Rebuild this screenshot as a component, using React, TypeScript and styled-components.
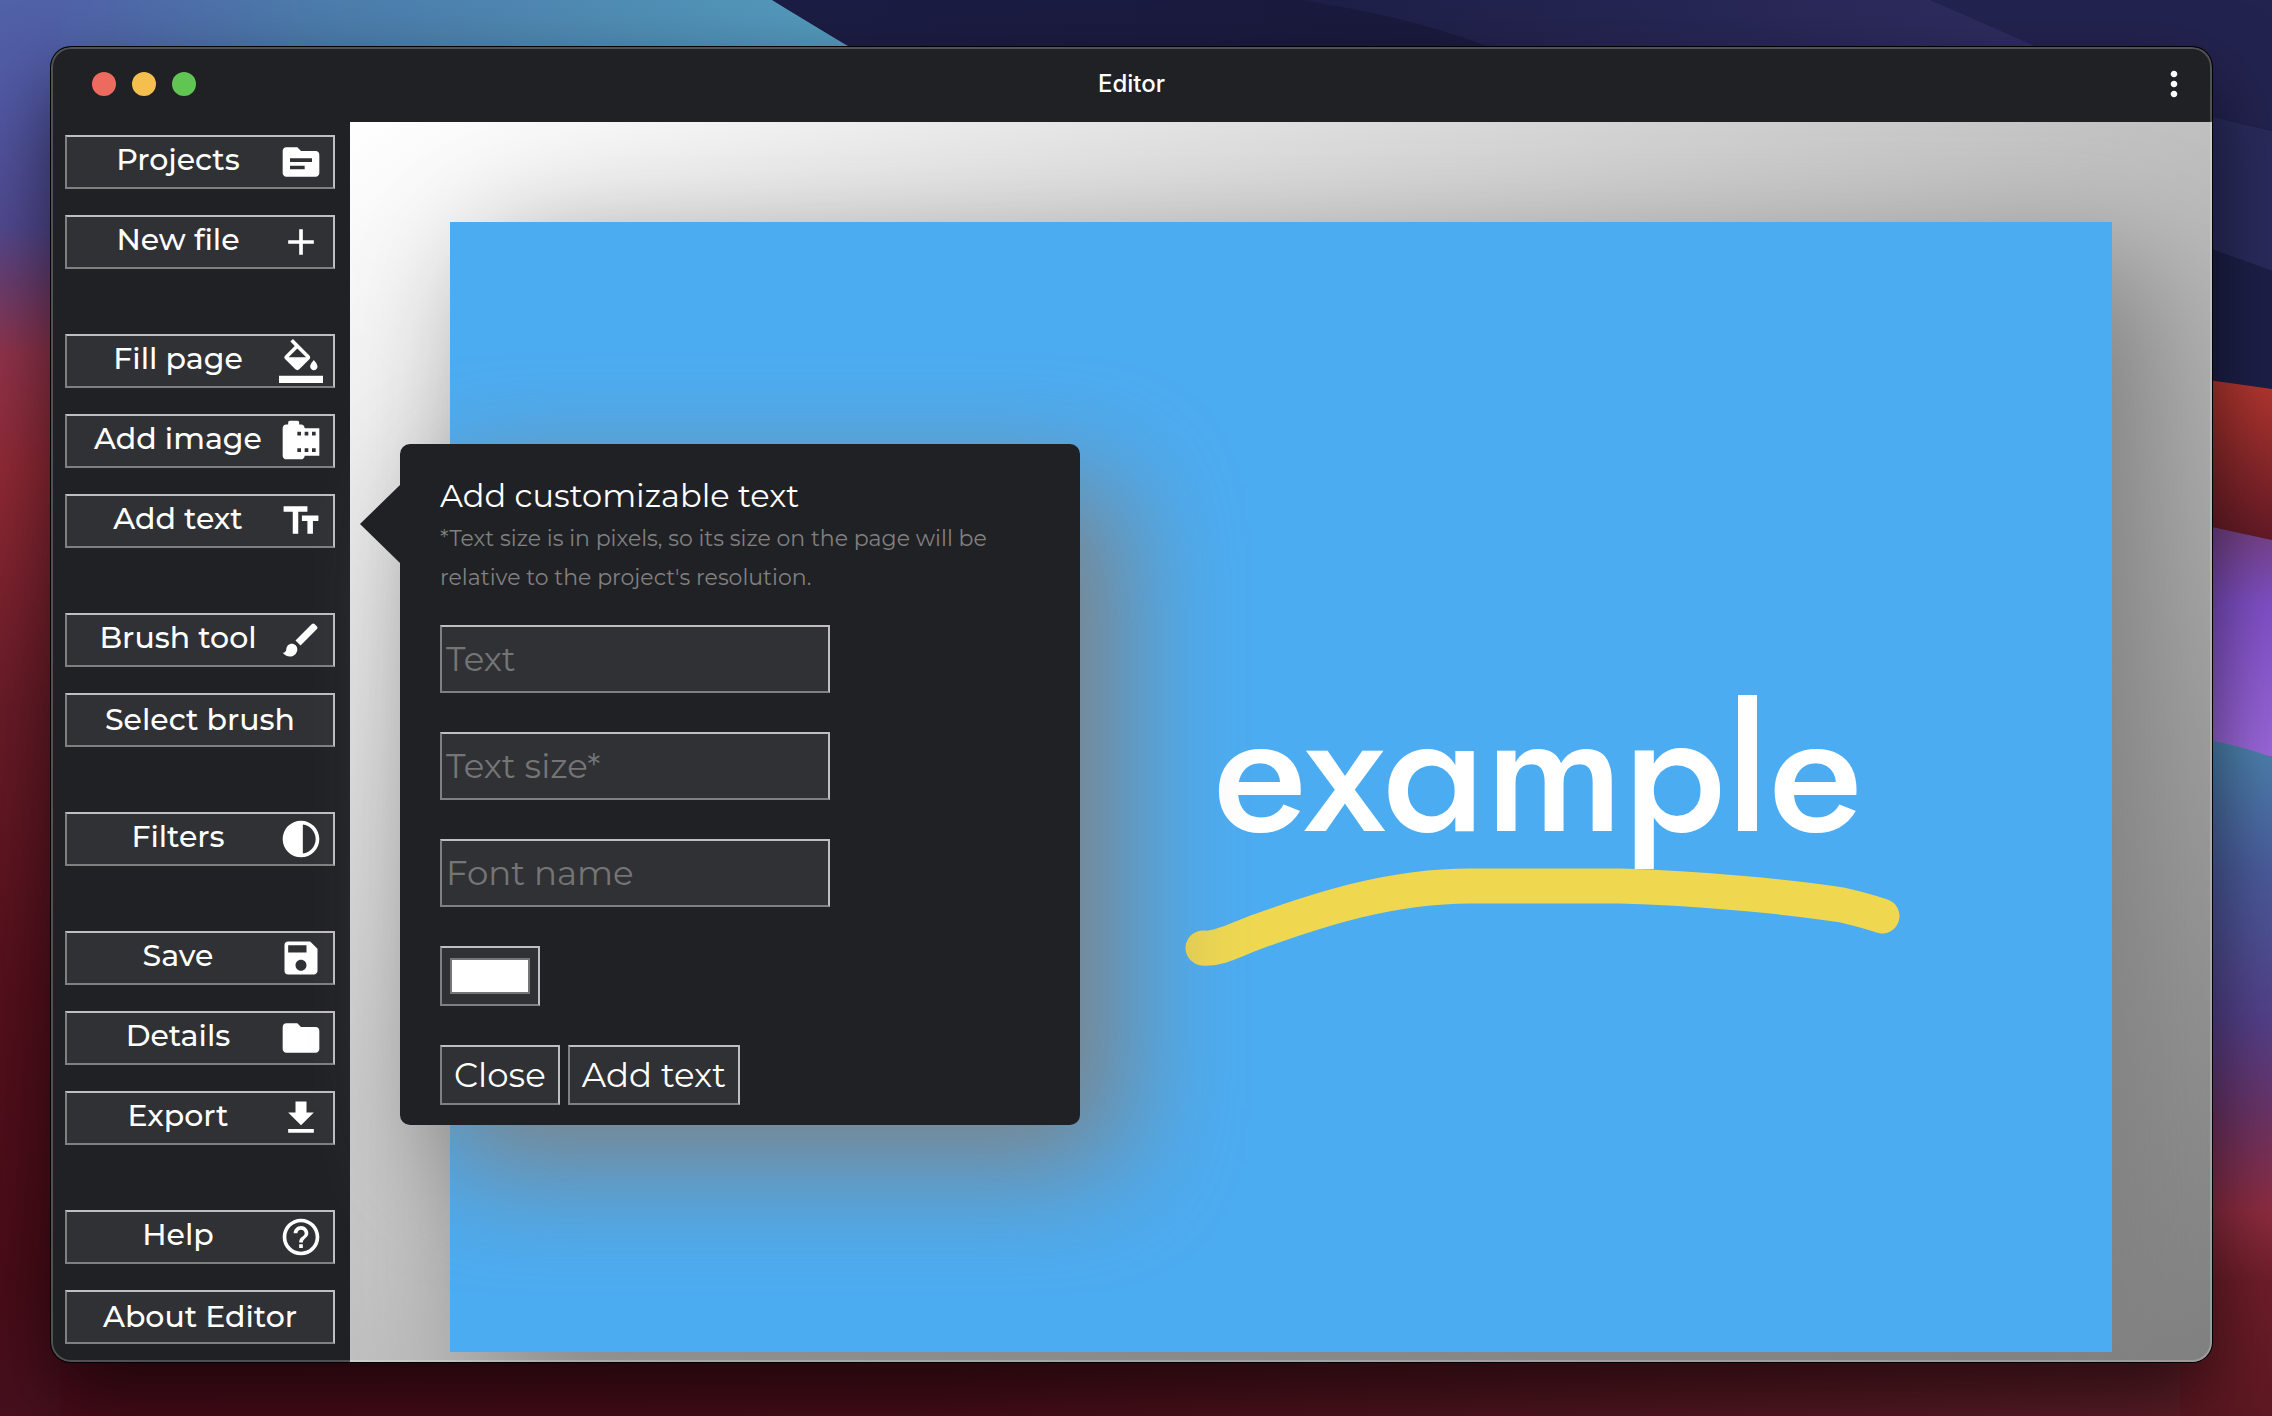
import React, { useState } from "react";
import styled, { createGlobalStyle } from "styled-components";
import type { IconType } from "react-icons";
import {
  MdAdd,
  MdBrush,
  MdCameraRoll,
  MdContrast,
  MdFileDownload,
  MdFolder,
  MdHelpOutline,
  MdMoreVert,
  MdSave,
  MdSource,
  MdTextFields,
} from "react-icons/md";

const color = {
  chrome: "#202124",
  control: "#303135",
  light: "#c0bebe",
  gray: "#808080",
  page: "#4cacf1",
  stroke: "#efd850",
};

const GlobalStyle = createGlobalStyle`
  *, *::before, *::after { box-sizing: border-box; }
  body { margin: 0; font-family: Montserrat, Inter, sans-serif; color: #fff; background: #48101a; }
`;

const Desktop = styled.div`
  position: relative;
  display: flex;
  min-height: 100vh;
  padding: 47px 60px 54px 51px;
  overflow: hidden;
`;

const WallpaperArt = styled.svg`
  position: absolute;
  inset: 0;
  width: 100%;
  height: 100%;
`;

const Window = styled.div`
  position: relative;
  flex: 1;
  display: flex;
  flex-direction: column;
  border-radius: 20px;
  overflow: hidden;
  background: ${color.chrome};
  box-shadow: 0 0 0 1px #000, 0 36px 80px rgba(0, 0, 0, 0.6);

  &::after {
    content: "";
    position: absolute;
    inset: 0;
    z-index: 3;
    border-radius: inherit;
    box-shadow: inset 0 0 0 2px rgba(255, 255, 255, 0.22);
    pointer-events: none;
  }
`;

const TitleBar = styled.header`
  display: grid;
  grid-template-columns: 1fr auto 1fr;
  align-items: center;
  height: 75px;
  padding: 0 18px 2px;
`;

const Lights = styled.div`
  display: flex;
  gap: 16px;
  padding-left: 23px;
`;

const Light = styled.button<{ $fill: string }>`
  width: 24px;
  height: 24px;
  padding: 0;
  border: 0;
  border-radius: 50%;
  background: ${(p) => p.$fill};
`;

const WindowTitle = styled.h1`
  margin: 0;
  font: 500 24px/32px Inter, sans-serif;
`;

const MenuButton = styled.button`
  display: flex;
  justify-self: end;
  padding: 0;
  border: 0;
  background: none;
  color: #fff;
  font-size: 40px;
`;

const Body = styled.div`
  flex: 1;
  display: flex;
`;

const Sidebar = styled.nav`
  flex: none;
  display: flex;
  flex-direction: column;
  gap: 65px;
  width: 299px;
  padding: 13px 15px 18px 14px;
`;

const Group = styled.div`
  display: flex;
  flex-direction: column;
  gap: 26px;
`;

const bevel = `
  border: 2px solid;
  border-color: ${color.light} ${color.light} ${color.gray} ${color.gray};
  border-radius: 0;
  background: ${color.control};
  color: #fff;
  font-family: inherit;
`;

const ToolButton = styled.button`
  ${bevel}
  display: flex;
  align-items: center;
  height: 54px;
  padding: 0 10px;
  font-size: 30px;
  font-weight: 500;
  line-height: 38px;
`;

const ToolLabel = styled.span<{ $raised: boolean }>`
  flex: 1;
  padding-bottom: ${(p) => (p.$raised ? 4 : 0)}px;
  white-space: nowrap;
`;

const ToolIcon = styled.span`
  display: flex;
  font-size: 44px;
`;

const Main = styled.main`
  position: relative;
  flex: 1;
  display: flex;
`;

const Workspace = styled.section`
  flex: 1;
  display: flex;
  padding: 100px 100px 10px;
  overflow: hidden;
  background: linear-gradient(to bottom right, #fff, ${color.gray});
`;

const Page = styled.div`
  flex: 1;
  display: flex;
  background: ${color.page};
  box-shadow: 40px 40px 120px ${color.gray};
`;

const PageArt = styled.svg`
  flex: 1;
  width: 100%;
`;

const Artwork = styled.text`
  font: 500 174px Jost, Inter, sans-serif;
  font-feature-settings: "ss01";
  fill: #fff;
`;

const Popover = styled.form`
  position: absolute;
  top: 322px;
  left: 50px;
  z-index: 2;
  display: flex;
  flex-direction: column;
  align-items: flex-start;
  gap: 39px;
  width: 680px;
  padding: 30px 40px 20px;
  border-radius: 10px;
  background: ${color.chrome};
  box-shadow: 40px 40px 120px ${color.gray};

  &::before {
    content: "";
    position: absolute;
    top: 40px;
    left: -40px;
    width: 41px;
    height: 80px;
    background: ${color.chrome};
    clip-path: polygon(100% 0, 0 50%, 100% 100%);
  }
`;

const Intro = styled.div`
  margin-bottom: -11px;
`;

const PopoverTitle = styled.h2`
  margin: 0;
  padding-bottom: 1px;
  font-size: 32px;
  font-weight: 400;
  line-height: 44px;
`;

const Note = styled.p`
  margin: 0;
  color: ${color.gray};
  font-size: 22px;
  line-height: 39px;
`;

const TextInput = styled.input`
  ${bevel}
  width: 390px;
  height: 68px;
  padding: 2px 4px;
  font-size: 34px;

  &::placeholder {
    color: #757575;
    opacity: 1;
  }
`;

const ColorInput = styled.input`
  ${bevel}
  width: 100px;
  height: 60px;
  padding: 10px 8px;

  &::-webkit-color-swatch-wrapper {
    padding: 0;
  }
  &::-webkit-color-swatch {
    border: 2px solid #757575;
    border-radius: 0;
  }
`;

const Actions = styled.div`
  display: flex;
  gap: 8px;
`;

const ActionButton = styled.button`
  ${bevel}
  height: 60px;
  padding: 0 12px;
  font-size: 34px;
  line-height: 44px;
`;

function FillIcon() {
  return (
    <svg viewBox="0 0 24 24" width="1em" height="1em" fill="currentColor" aria-hidden="true">
      <path d="M16.56 8.94L7.62 0 6.21 1.41l2.38 2.38-5.15 5.15a1.49 1.49 0 0 0 0 2.12l5.5 5.5c.29.29.68.44 1.06.44s.77-.15 1.06-.44l5.5-5.5c.59-.58.59-1.53 0-2.12zM5.21 10L10 5.21 14.79 10H5.21zM19 11.5s-2 2.17-2 3.5c0 1.1.9 2 2 2s2-.9 2-2c0-1.33-2-3.5-2-3.5zM0 20h24v4H0z" />
    </svg>
  );
}

type Tool = { label: string; icon?: IconType | (() => React.JSX.Element) };

const groups: Tool[][] = [
  [
    { label: "Projects", icon: MdSource },
    { label: "New file", icon: MdAdd },
  ],
  [
    { label: "Fill page", icon: FillIcon },
    { label: "Add image", icon: MdCameraRoll },
    { label: "Add text", icon: MdTextFields },
  ],
  [{ label: "Brush tool", icon: MdBrush }, { label: "Select brush" }],
  [{ label: "Filters", icon: MdContrast }],
  [
    { label: "Save", icon: MdSave },
    { label: "Details", icon: MdFolder },
    { label: "Export", icon: MdFileDownload },
  ],
  [{ label: "Help", icon: MdHelpOutline }, { label: "About Editor" }],
];

const lights = [
  { name: "Close window", fill: "#ed6a5e" },
  { name: "Minimize window", fill: "#f5bf4f" },
  { name: "Zoom window", fill: "#61c554" },
];

type Stops = [number, string][];

function Gradient({ id, stops, across = false }: { id: string; stops: Stops; across?: boolean }) {
  return (
    <linearGradient id={id} x1="0" y1="0" x2={across ? 1 : 0} y2={across ? 0 : 1}>
      {stops.map(([at, tint]) => (
        <stop key={at} offset={at} stopColor={tint} />
      ))}
    </linearGradient>
  );
}

function Wallpaper() {
  return (
    <WallpaperArt viewBox="0 0 2272 1416" preserveAspectRatio="none" aria-hidden="true">
      <defs>
        <Gradient
          id="leftSide"
          stops={[
            [0, "#5062a8"],
            [0.08, "#5258a4"],
            [0.16, "#524a92"],
            [0.2, "#6c3e70"],
            [0.25, "#92344c"],
            [0.33, "#922a36"],
            [0.5, "#6a1c28"],
            [0.7, "#56101c"],
            [0.9, "#4a0c18"],
            [1, "#48101e"],
          ]}
        />
        <Gradient id="sky" across stops={[[0, "#5062a8"], [0.3, "#4c7cac"], [1, "#549ebe"]]} />
        <Gradient id="navy" across stops={[[0, "#1c1d44"], [0.4, "#1a1a3e"], [1, "#202048"]]} />
        <Gradient id="dune" across stops={[[0, "#1e1f48"], [1, "#302e62"]]} />
        <Gradient id="red" stops={[[0, "#b83830"], [1, "#641a26"]]} />
        <Gradient id="purple" stops={[[0, "#74407e"], [0.35, "#8050c8"], [1, "#9c68dc"]]} />
        <Gradient
          id="rightSide"
          stops={[
            [0, "#4c86b0"],
            [0.2, "#4a5c9c"],
            [0.42, "#54408a"],
            [0.55, "#6a3468"],
            [0.7, "#8e2c40"],
            [0.8, "#701e2a"],
            [1, "#5e1822"],
          ]}
        />
        <Gradient id="floor" across stops={[[0, "#4a0c1a"], [0.4, "#4c0e1a"], [1, "#62202a"]]} />
      </defs>
      <rect width="1136" height="1416" fill="url(#leftSide)" />
      <path d="M60 0H900V200H60z" fill="url(#sky)" />
      <path d="M60 1300H2272V1416H60z" fill="url(#floor)" />
      <path d="M772 0Q812 22 848 46L1000 200H2272V500H1136V200L848 46z" fill="#1c1e44" />
      <path d="M772 0H2272V140H1000Q920 90 848 46z" fill="url(#navy)" />
      <path d="M1300 0H1930Q1990 22 2035 46L2100 100H1580Q1500 30 1300 0z" fill="url(#dune)" />
      <path d="M1930 0H2272V130L2200 114L2035 46z" fill="#232350" />
      <path d="M2200 114L2272 131V271L2200 245z" fill="#2a2b5c" />
      <path d="M2200 245L2272 271V389L2200 378z" fill="#1d1f48" />
      <path d="M2180 376L2272 389V540L2180 520z" fill="url(#red)" />
      <path d="M2180 520L2272 540V757L2180 735z" fill="url(#purple)" />
      <path d="M2180 735Q2230 742 2272 757V1416H2180z" fill="url(#rightSide)" />
    </WallpaperArt>
  );
}

function PageDrawing() {
  return (
    <PageArt viewBox="0 0 1662 1130">
      <Artwork x="763" y="609">
        example
      </Artwork>
      <path
        d="M753 726C770 728 788 716 812 708C868 688 940 664 1020 664H1170C1250 666 1350 676 1392 683Q1414 688 1432 694"
        fill="none"
        stroke={color.stroke}
        strokeWidth="35"
        strokeLinecap="round"
      />
    </PageArt>
  );
}

function AddTextPopover() {
  const [tint, setTint] = useState("#ffffff");
  return (
    <Popover onSubmit={(e) => e.preventDefault()}>
      <Intro>
        <PopoverTitle>Add customizable text</PopoverTitle>
        <Note>*Text size is in pixels, so its size on the page will be relative to the project's resolution.</Note>
      </Intro>
      <TextInput type="text" placeholder="Text" aria-label="Text" />
      <TextInput type="text" inputMode="numeric" placeholder="Text size*" aria-label="Text size" />
      <TextInput type="text" placeholder="Font name" aria-label="Font name" />
      <ColorInput type="color" aria-label="Text color" value={tint} onChange={(e) => setTint(e.target.value)} />
      <Actions>
        <ActionButton type="button">Close</ActionButton>
        <ActionButton type="submit">Add text</ActionButton>
      </Actions>
    </Popover>
  );
}

export default function App() {
  return (
    <Desktop>
      <GlobalStyle />
      <Wallpaper />
      <Window>
        <TitleBar>
          <Lights>
            {lights.map((l) => (
              <Light key={l.name} $fill={l.fill} aria-label={l.name} />
            ))}
          </Lights>
          <WindowTitle>Editor</WindowTitle>
          <MenuButton aria-label="More options">
            <MdMoreVert />
          </MenuButton>
        </TitleBar>
        <Body>
          <Sidebar>
            {groups.map((tools) => (
              <Group key={tools[0].label}>
                {tools.map(({ label, icon: Icon }) => (
                  <ToolButton key={label} type="button">
                    <ToolLabel $raised={Boolean(Icon)}>{label}</ToolLabel>
                    {Icon && (
                      <ToolIcon>
                        <Icon />
                      </ToolIcon>
                    )}
                  </ToolButton>
                ))}
              </Group>
            ))}
          </Sidebar>
          <Main>
            <Workspace>
              <Page>
                <PageDrawing />
              </Page>
            </Workspace>
            <AddTextPopover />
          </Main>
        </Body>
      </Window>
    </Desktop>
  );
}
